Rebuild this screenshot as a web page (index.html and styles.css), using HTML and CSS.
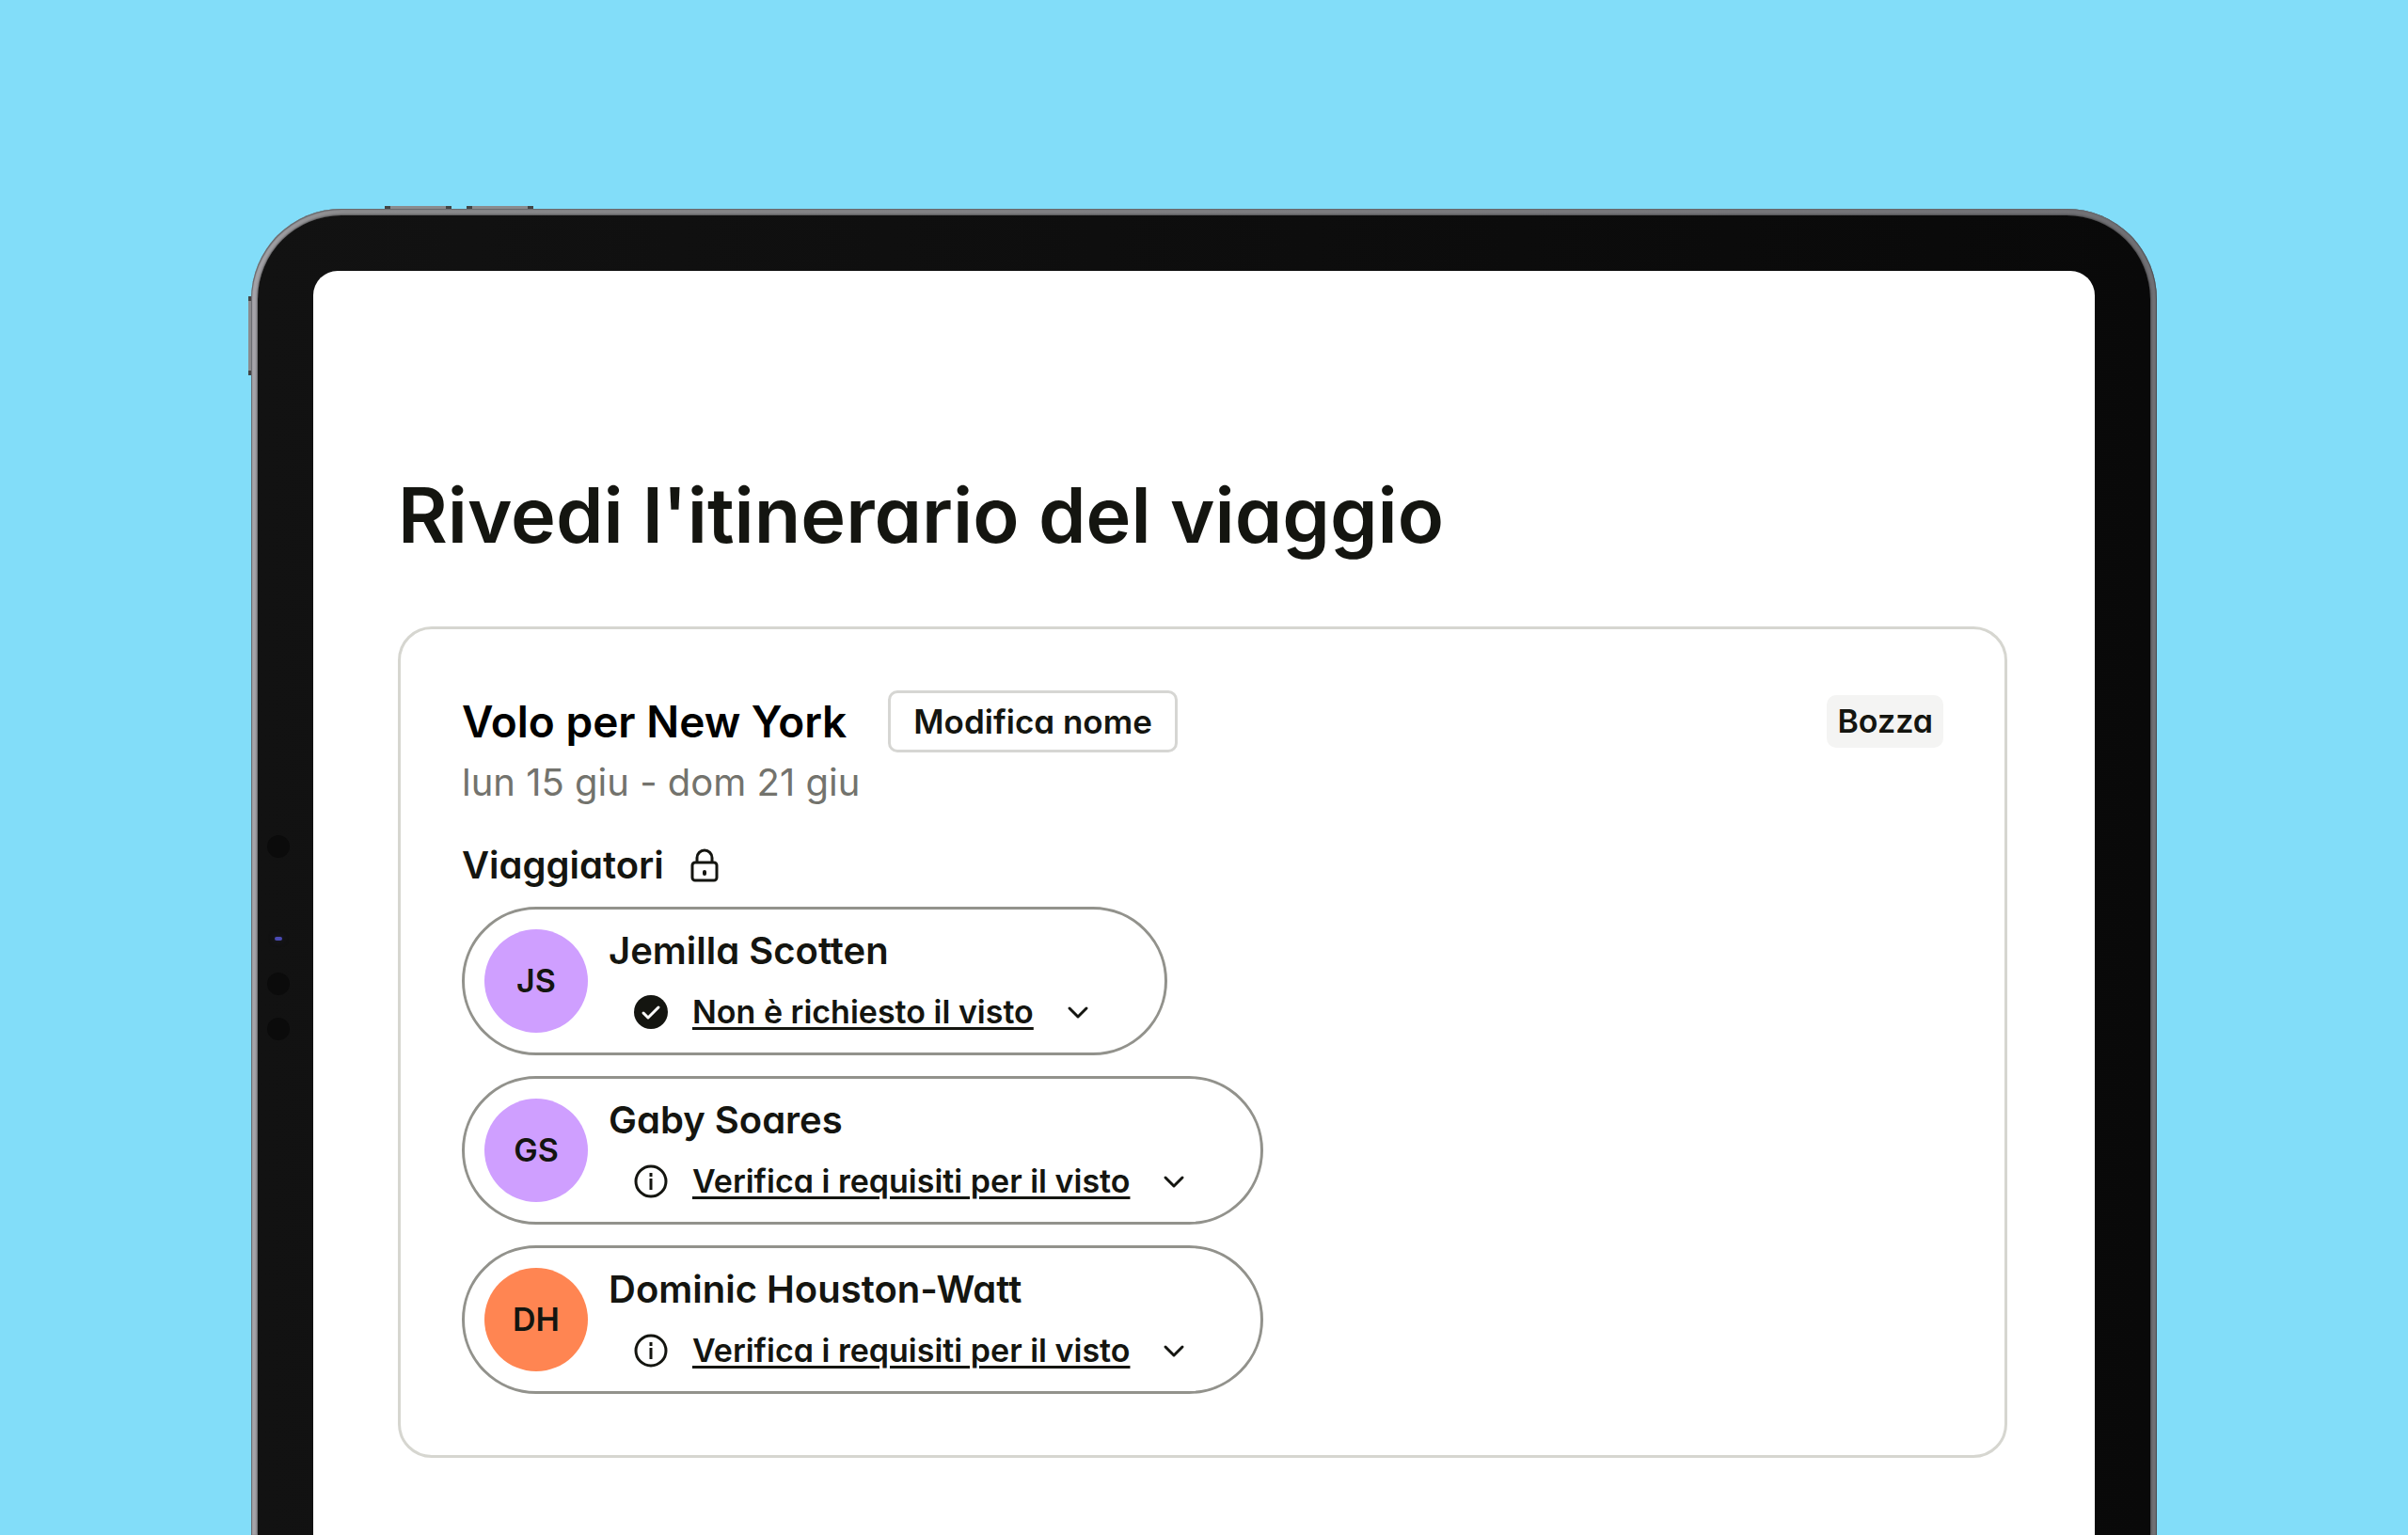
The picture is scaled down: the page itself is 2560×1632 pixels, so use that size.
FILE: index.html
```html
<!DOCTYPE html>
<html lang="it">
<head>
    <meta charset="UTF-8">
    <meta name="viewport" content="width=device-width, initial-scale=1.0">
    <link rel="stylesheet" href="styles.css">
    <title>Rivedi l'itinerario del viaggio</title>
</head>
<body>
    <div class="tablet">
        <span class="key key-left"></span>
        <span class="key key-top"></span>
        <span class="key key-top key-second"></span>
        <div class="bezel">
            <!-- camera and sensors -->
            <div class="sensors">
                <span class="lens"></span>
                <span class="led"></span>
                <span class="lens"></span>
                <span class="lens"></span>
            </div>
            <main class="screen">
                <h1>Rivedi l'itinerario del viaggio</h1>
                <section class="card">
                    <header class="card-header">
                        <h2>Volo per New York</h2>
                        <button type="button" class="rename">Modifica nome</button>
                        <span class="badge">Bozza</span>
                    </header>
                    <p class="dates">lun 15 giu - dom 21 giu</p>
                    <h3>Viaggiatori
                        <svg class="lock" viewBox="0 0 30 36" fill="none" stroke="currentColor" stroke-width="3">
                            <rect x="2" y="15" width="26" height="19" rx="3"/>
                            <path d="M7 15V10a8 8 0 0 1 16 0v5"/>
                            <path d="M15 25v2" stroke-width="4" stroke-linecap="round"/>
                        </svg>
                    </h3>
                    <ul class="travellers">
                        <li class="traveller">
                            <span class="avatar">JS</span>
                            <div class="info">
                                <p class="name">Jemilla Scotten</p>
                                <div class="visa">
                                    <svg class="status" viewBox="0 0 36 36" fill="none">
                                        <circle cx="18" cy="18" r="18" fill="currentColor"/>
                                        <path d="M10 19l5 5 11-11" stroke="#fff" stroke-width="3" stroke-linecap="round" stroke-linejoin="round"/>
                                    </svg>
                                    <a href="#">Non è richiesto il visto</a>
                                    <svg class="chevron" viewBox="0 0 24 16" fill="none" stroke="currentColor" stroke-width="3" stroke-linecap="round" stroke-linejoin="round">
                                        <path d="M3 4l9 9 9-9"/>
                                    </svg>
                                </div>
                            </div>
                        </li>
                        <li class="traveller">
                            <span class="avatar">GS</span>
                            <div class="info">
                                <p class="name">Gaby Soares</p>
                                <div class="visa">
                                    <svg class="status" viewBox="0 0 36 36" fill="none" stroke="currentColor" stroke-width="3">
                                        <circle cx="18" cy="18" r="16"/>
                                        <path d="M18 15v12M18 9v4"/>
                                    </svg>
                                    <a href="#">Verifica i requisiti per il visto</a>
                                    <svg class="chevron" viewBox="0 0 24 16" fill="none" stroke="currentColor" stroke-width="3" stroke-linecap="round" stroke-linejoin="round">
                                        <path d="M3 4l9 9 9-9"/>
                                    </svg>
                                </div>
                            </div>
                        </li>
                        <li class="traveller">
                            <span class="avatar orange">DH</span>
                            <div class="info">
                                <p class="name">Dominic Houston-Watt</p>
                                <div class="visa">
                                    <svg class="status" viewBox="0 0 36 36" fill="none" stroke="currentColor" stroke-width="3">
                                        <circle cx="18" cy="18" r="16"/>
                                        <path d="M18 15v12M18 9v4"/>
                                    </svg>
                                    <a href="#">Verifica i requisiti per il visto</a>
                                    <svg class="chevron" viewBox="0 0 24 16" fill="none" stroke="currentColor" stroke-width="3" stroke-linecap="round" stroke-linejoin="round">
                                        <path d="M3 4l9 9 9-9"/>
                                    </svg>
                                </div>
                            </div>
                        </li>
                    </ul>
                </section>
            </main>
        </div>
    </div>
</body>
</html>
```
FILE: styles.css
```css
* {
  box-sizing: border-box;
  margin: 0;
  padding: 0;
}

body {
  display: flex;
  flex-direction: column;
  min-height: 100vh;
  padding: 222px 267px 0;
  background-color: #82ddf9;
  color: #141510;
  font-family: Inter, "Liberation Sans", sans-serif;
  font-feature-settings: "cv11";
  font-weight: 600;
}

/* tablet */
.tablet {
  position: relative;
  flex: 1;
  display: flex;
  padding: 7px 7px 0;
  border-radius: 96px 96px 0 0;
  background: linear-gradient(to right, #a5a4a9, #8a8a8c 5%, #707074);
  box-shadow: inset 1px 1px 1px #66686c, inset -1px 0 1px #4c4c50;
}

.bezel {
  position: relative;
  flex: 1;
  display: flex;
  padding: 59px 59px 0;
  border-radius: 89px 89px 0 0;
  background: linear-gradient(to right, #121212, #090909);
  box-shadow: 0 0 3px #222;
}

.key {
  position: absolute;
  background-color: #8a8b8e;
}
.key-left {
  top: 93px;
  left: -3px;
  width: 3px;
  height: 84px;
  border-top: 5px solid #444;
  border-bottom: 5px solid #444;
}
.key-top {
  top: -3px;
  left: 142px;
  width: 71px;
  height: 3px;
  border-left: 6px solid #444;
  border-right: 6px solid #444;
}
.key-second {
  left: 229px;
}

.sensors {
  position: absolute;
  top: 659px;
  left: 10px;
  display: flex;
  flex-direction: column;
  align-items: center;
  gap: 24px;
}
.lens {
  width: 24px;
  height: 24px;
  border-radius: 50%;
  background-color: #0b0b0b;
}
.led {
  width: 8px;
  height: 4px;
  margin: 60px 0 10px;
  border-radius: 2px;
  background-color: #4a4ab4;
  box-shadow: 0 0 6px #222235;
}

.screen {
  flex: 1;
  padding: 210px 93px 0 90px;
  border-radius: 26px 26px 0 0;
  background-color: #fff;
}

h1 {
  margin-bottom: 68px;
  font-size: 81px;
  font-weight: 600;
  line-height: 100px;
}

/* trip card */
.card {
  padding: 65px;
  border: 3px solid #d6d6d0;
  border-radius: 36px;
}

.card-header {
  display: flex;
  align-items: center;
}

h2 {
  color: #000;
  font-size: 46px;
  font-weight: 600;
  line-height: 56px;
}

.rename {
  height: 66px;
  margin-left: 44px;
  padding: 0 24px;
  border: 3px solid #d6d6d3;
  border-radius: 10px;
  background-color: #fff;
  color: inherit;
  font: inherit;
  font-feature-settings: inherit;
  font-size: 35px;
}

.badge {
  margin-left: auto;
  padding: 0 11px;
  border-radius: 10px;
  background-color: #f4f4f3;
  font-size: 34px;
  line-height: 56px;
}

.dates {
  margin-top: 8px;
  color: #73736d;
  font-size: 40px;
  font-weight: 400;
  line-height: 48px;
}

h3 {
  display: flex;
  align-items: center;
  gap: 28px;
  margin: 40px 0 20px;
  font-size: 40px;
  font-weight: 600;
  line-height: 48px;
}

.lock {
  width: 30px;
  height: 36px;
}

/* travellers */
.travellers {
  display: flex;
  flex-direction: column;
  align-items: flex-start;
  gap: 22px;
  list-style: none;
}

.traveller {
  display: flex;
  align-items: center;
  gap: 22px;
  height: 158px;
  padding: 0 80px 0 21px;
  border: 3px solid #92928c;
  border-radius: 79px;
}

.avatar {
  width: 110px;
  height: 110px;
  border-radius: 50%;
  background-color: #cf9fff;
  font-size: 34px;
  line-height: 110px;
  text-align: center;
}
.orange {
  background-color: #ff8552;
}

.name {
  font-size: 40px;
  line-height: 48px;
}

.visa {
  display: flex;
  align-items: center;
  margin: 17px 0 0 27px;
  font-size: 34px;
  line-height: 48px;
}
.visa a {
  margin: 0 35px 0 26px;
  color: inherit;
  text-decoration-thickness: 3px;
  text-underline-offset: 4px;
}

.status {
  width: 36px;
  height: 36px;
}

.chevron {
  width: 24px;
  height: 16px;
}
```
